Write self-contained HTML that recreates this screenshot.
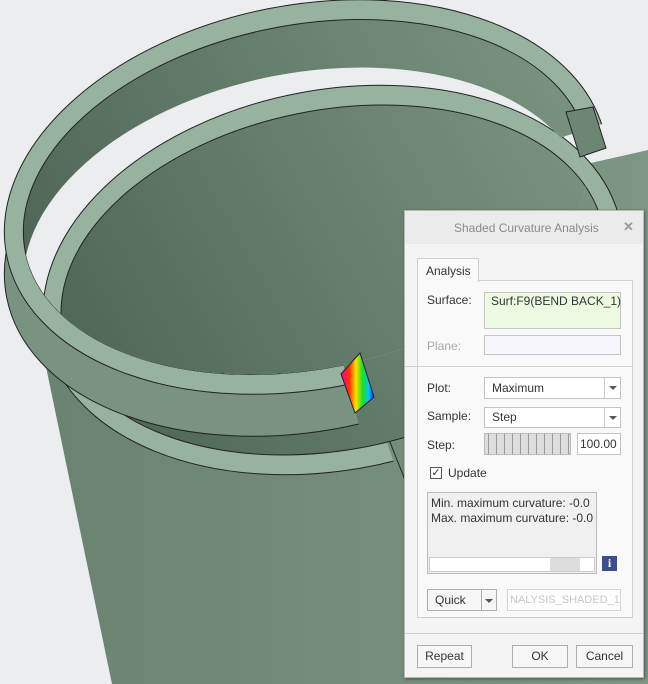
<!DOCTYPE html>
<html><head><meta charset="utf-8"><style>
*{box-sizing:border-box}
body{margin:0;width:648px;height:684px;overflow:hidden;background:#ebedf0;font-family:"Liberation Sans",sans-serif;font-size:12px;color:#333;position:relative}
svg{position:absolute;left:0;top:0}
.a{position:absolute}
.dlg{left:404px;top:210px;width:240px;height:468px;background:#f4f4f4;border:1px solid #b8b8b8;box-shadow:1px 1px 3px rgba(0,0,0,.4)}
.lbl{position:absolute;font-size:12px;color:#333;white-space:nowrap}
.box{position:absolute;border:1px solid #c4c4c4;background:#fff}
.btn{position:absolute;border:1px solid #adadad;background:#f6f6f6;text-align:center;line-height:21px;font-size:12px}
.arr{position:absolute;width:0;height:0;border-left:4px solid transparent;border-right:4px solid transparent;border-top:4px solid #555}
</style></head><body>
<svg width="648" height="684" viewBox="0 0 648 684">
<defs>
<linearGradient id="body" x1="0" x2="1"><stop offset="0" stop-color="#6a8370"/><stop offset="1" stop-color="#7d9684"/></linearGradient>
<linearGradient id="inn" gradientUnits="userSpaceOnUse" x1="60" y1="330" x2="600" y2="150"><stop offset="0" stop-color="#4f6656"/><stop offset="1" stop-color="#7a9380"/></linearGradient>
<clipPath id="c1"><polygon points="306,220 800,60 800,-50 -50,-50 -50,700 430,700"/></clipPath>
<clipPath id="c2"><polygon points="333,280 660,300 800,300 800,-50 -50,-50 -50,700 473,700"/></clipPath>
<clipPath id="h1"><ellipse cx="306" cy="197" rx="286" ry="172" transform="rotate(-11 306 197)"/></clipPath>
<clipPath id="h1s"><ellipse cx="306" cy="245" rx="286" ry="172" transform="rotate(-11 306 245)"/></clipPath>
</defs>
<path d="M30,290 L112,684 L648,684 L648,150 Z" fill="url(#body)"/>
<line x1="388" y1="437" x2="405" y2="480" stroke="#222" stroke-width="1"/>
<g clip-path="url(#c2)" stroke="#222" stroke-width="1">
<ellipse cx="333" cy="280" rx="293" ry="190" transform="rotate(-11 333 280)" fill="#97b39f"/>
</g>
<ellipse cx="333" cy="280" rx="275" ry="170" transform="rotate(-11 333 280)" fill="url(#inn)" stroke="#222"/>
<g clip-path="url(#c1)" stroke="#222" stroke-width="1">
<ellipse cx="306" cy="239" rx="305" ry="192" transform="rotate(-11 306 239)" fill="#7a9380"/>
<ellipse cx="306" cy="197" rx="305" ry="192" transform="rotate(-11 306 197)" fill="#97b39f"/>
<ellipse cx="306" cy="197" rx="286" ry="172" transform="rotate(-11 306 197)" fill="url(#inn)"/>
</g>
<g clip-path="url(#h1)"><g clip-path="url(#h1s)">
<rect width="648" height="684" fill="#ebedf0"/>
<ellipse cx="333" cy="280" rx="293" ry="190" transform="rotate(-11 333 280)" fill="#97b39f" stroke="#222"/>
<ellipse cx="333" cy="280" rx="275" ry="170" transform="rotate(-11 333 280)" fill="url(#inn)" stroke="#222"/>
</g></g>
<polygon points="566,112 593,107 606,148 580,157" fill="#6d8673" stroke="#222"/>
<defs><linearGradient id="rb" x1="0" x2="1"><stop offset="0" stop-color="#ff00aa"/><stop offset=".25" stop-color="#ff3000"/><stop offset=".45" stop-color="#ffe000"/><stop offset=".65" stop-color="#20e020"/><stop offset=".85" stop-color="#00c0ff"/><stop offset="1" stop-color="#0030ff"/></linearGradient></defs>
<polygon points="341,374 360,353 374,397 355,413" fill="url(#rb)" stroke="#223"/>
</svg>

<div class="a dlg">
 <div class="a" style="left:0;top:0;width:238px;height:33px;background:#ebebeb"></div>
 <div class="lbl" style="left:49px;top:10px;color:#8a8a8a">Shaded Curvature Analysis</div>
 <div class="lbl" style="left:218px;top:8px;color:#999;font-size:13px;font-weight:bold">✕</div>
 <div class="a" style="left:12px;top:69px;width:216px;height:338px;border:1px solid #cfcfcf;background:#f9f9f9"></div>
 <div class="a" style="left:12px;top:47px;width:62px;height:24px;border:1px solid #cfcfcf;border-bottom:none;background:#f9f9f9"></div>
 <div class="lbl" style="left:21px;top:53px">Analysis</div>
 <div class="lbl" style="left:22px;top:82px">Surface:</div>
 <div class="box" style="left:79px;top:81px;width:137px;height:37px;background:#ecfae2"></div>
 <div class="lbl" style="left:86px;top:83px">Surf:F9(BEND BACK_1)</div>
 <div class="lbl" style="left:22px;top:128px;color:#aaa">Plane:</div>
 <div class="box" style="left:79px;top:124px;width:137px;height:20px;background:#f7f5fc"></div>
 <div class="a" style="left:0;top:155px;width:228px;height:1px;background:#d0d0d0"></div>
 <div class="lbl" style="left:22px;top:170px">Plot:</div>
 <div class="box" style="left:79px;top:166px;width:137px;height:22px"></div>
 <div class="lbl" style="left:87px;top:170px">Maximum</div>
 <div class="a" style="left:199px;top:167px;width:1px;height:20px;background:#ccc"></div>
 <div class="arr" style="left:204px;top:175px"></div>
 <div class="lbl" style="left:22px;top:198px">Sample:</div>
 <div class="box" style="left:79px;top:196px;width:137px;height:21px"></div>
 <div class="lbl" style="left:87px;top:199px">Step</div>
 <div class="a" style="left:199px;top:197px;width:1px;height:19px;background:#ccc"></div>
 <div class="arr" style="left:204px;top:205px"></div>
 <div class="lbl" style="left:22px;top:227px">Step:</div>
 <div class="box" style="left:79px;top:222px;width:87px;height:22px;background:repeating-linear-gradient(90deg,#ddd 0 3px,#999 3px 4px,#ddd 4px 8px);border-color:#bbb"></div>
 <div class="box" style="left:172px;top:222px;width:44px;height:22px"></div>
 <div class="lbl" style="left:175px;top:226px">100.00</div>
 <div class="box" style="left:25px;top:256px;width:12px;height:12px;border-color:#555;font-size:11px;line-height:10px;text-align:center">✓</div>
 <div class="lbl" style="left:43px;top:255px">Update</div>
 <div class="box" style="left:22px;top:281px;width:170px;height:82px;background:#f0f0f0;border-color:#bbb;overflow:hidden">
  <div style="position:absolute;left:3px;top:3px;white-space:nowrap;line-height:15px">Min. maximum curvature: -0.0<br>Max. maximum curvature: -0.0</div>
  <div style="position:absolute;left:1px;bottom:1px;width:166px;height:15px;background:#fff;border:1px solid #ccc"><div style="position:absolute;right:14px;top:0;width:30px;height:13px;background:#ddd"></div></div>
 </div>
 <div class="a" style="left:197px;top:345px;width:15px;height:15px;background:#3b4d8a;color:#fff;font-weight:bold;text-align:center;line-height:15px;font-family:'Liberation Serif',serif;font-size:12px">i</div>
 <div class="box" style="left:22px;top:378px;width:70px;height:22px;background:#f6f6f6;border-color:#adadad"></div>
 <div class="lbl" style="left:30px;top:382px">Quick</div>
 <div class="a" style="left:76px;top:379px;width:1px;height:20px;background:#adadad"></div>
 <div class="arr" style="left:80px;top:388px"></div>
 <div class="box" style="left:102px;top:378px;width:114px;height:22px;border-color:#d4d4d4;overflow:hidden"><div class="lbl" style="left:2px;top:4px;color:#c6c6c6;font-size:11px">NALYSIS_SHADED_1</div></div>
 <div class="a" style="left:0;top:422px;width:238px;height:1px;background:#cfcfcf"></div>
 <div class="btn" style="left:12px;top:434px;width:55px;height:23px">Repeat</div>
 <div class="btn" style="left:107px;top:434px;width:56px;height:23px">OK</div>
 <div class="btn" style="left:171px;top:434px;width:57px;height:23px">Cancel</div>
</div>
</body></html>
